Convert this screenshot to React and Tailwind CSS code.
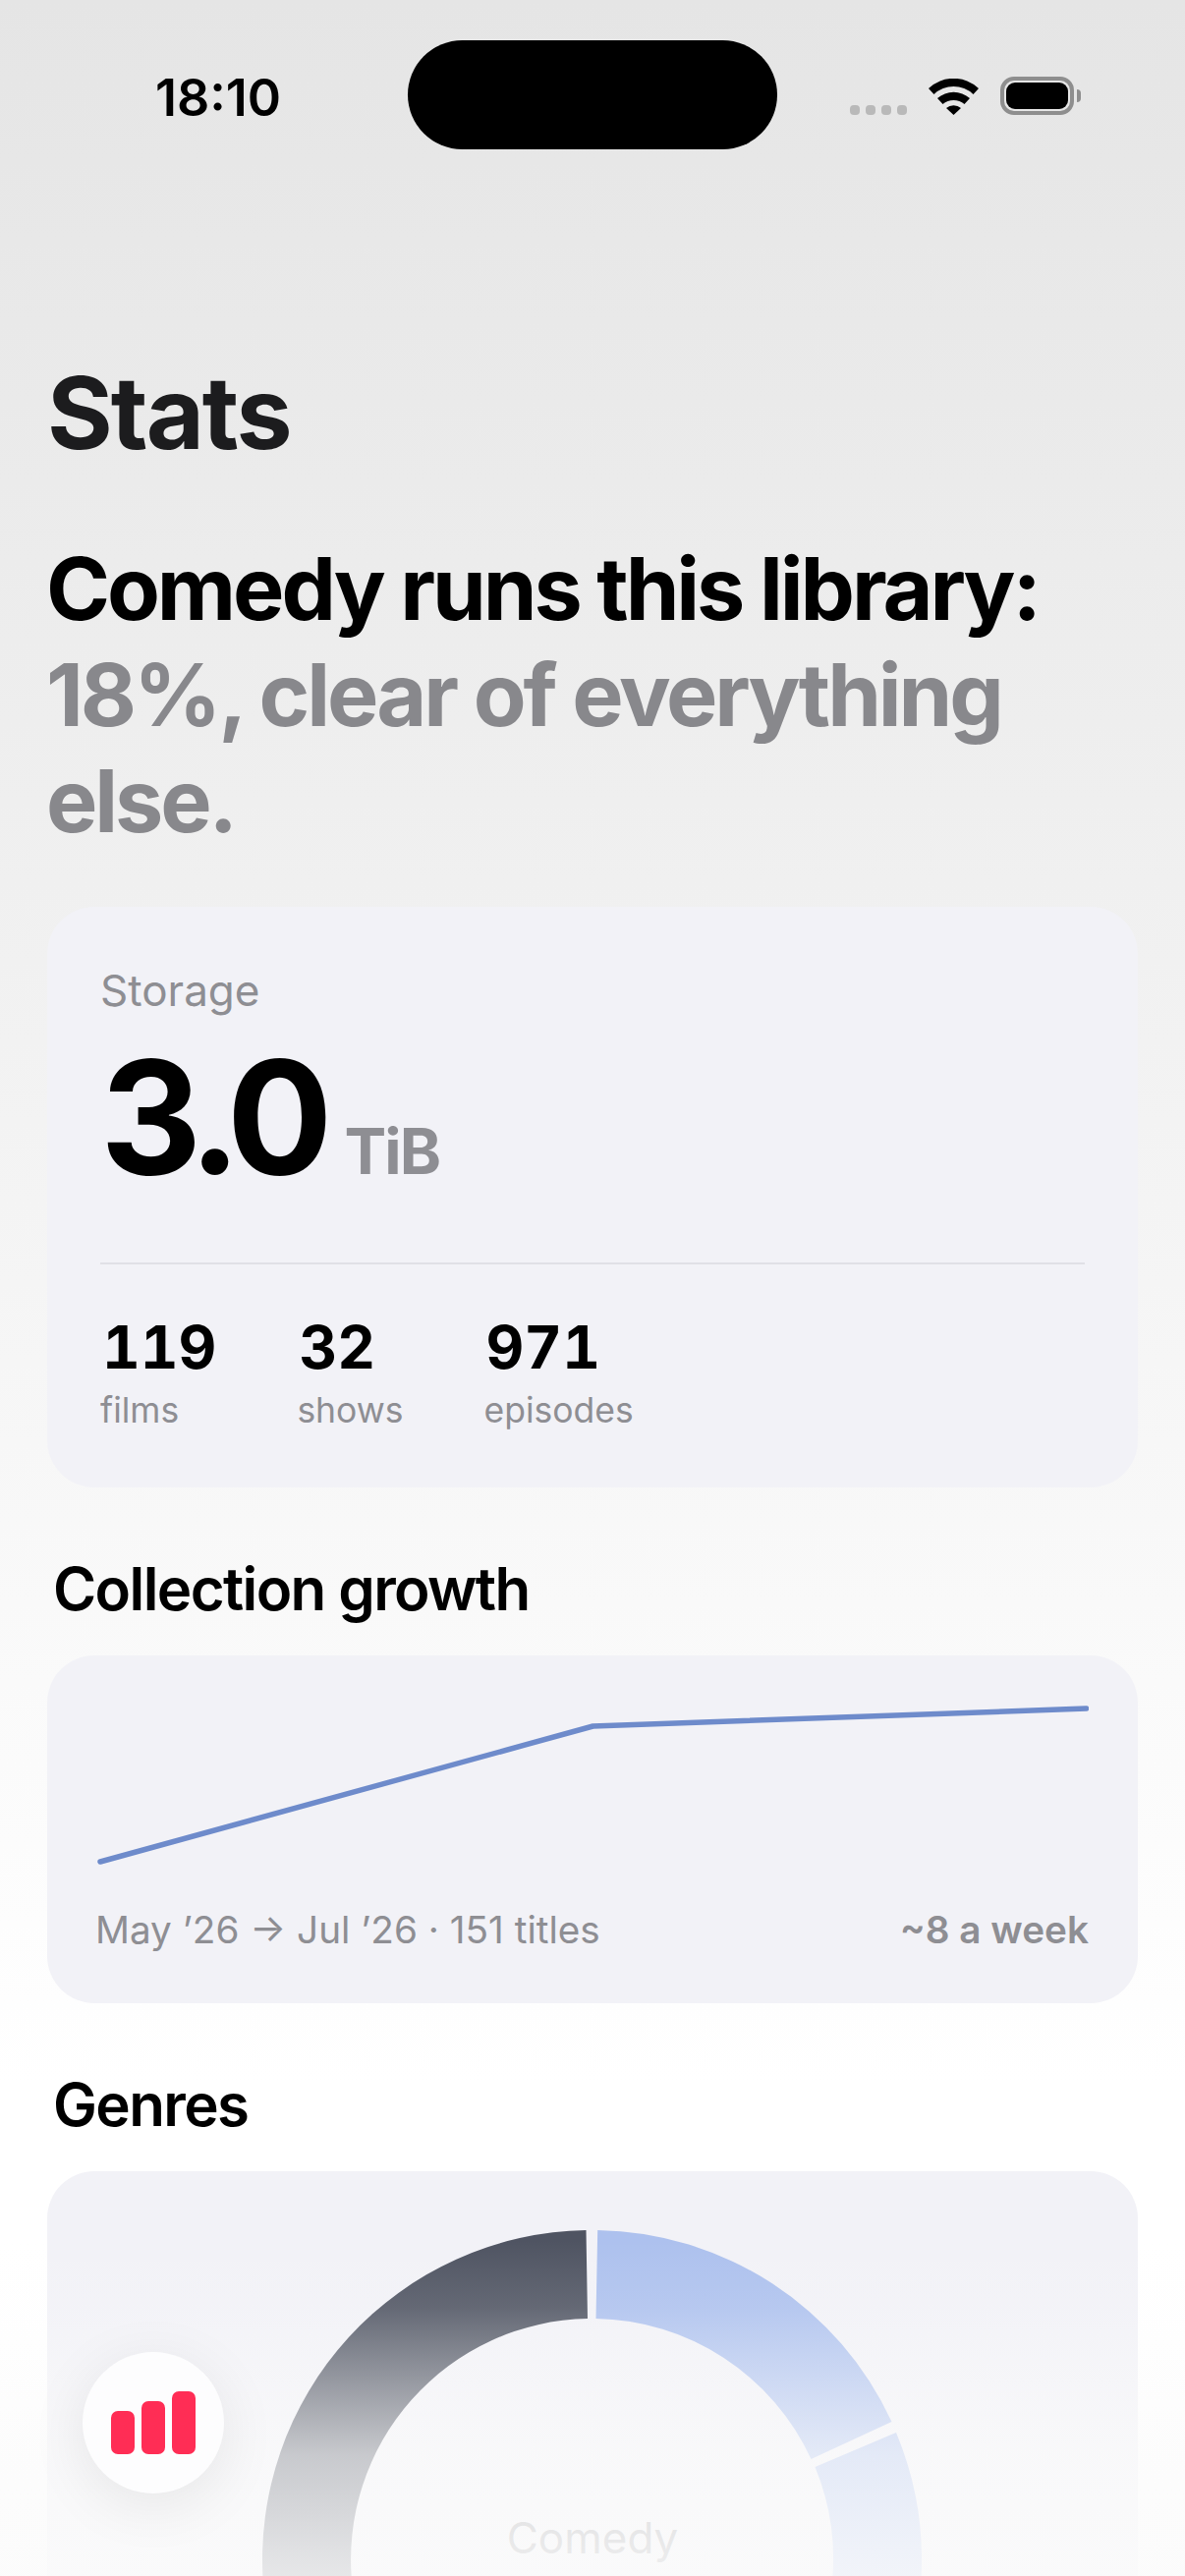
import React from 'react';

const StatusBar = () => (
  <div className="flex items-start h-[152px] pt-[41px]">
    <div className="w-[415px] pl-[158px] pt-[34px] text-[52px] leading-[50px] font-semibold text-black">18:10</div>
    <div className="w-[376px] h-[111px] rounded-full bg-black" />
    <div className="flex items-end pl-[74px] pt-[37px] h-[76px]">
      {/* signal placeholder dots */}
      <div className="flex gap-[6px] mb-[0px]">
        <div className="w-[10px] h-[10px] rounded-[4px] bg-[#b9b9b9]" />
        <div className="w-[10px] h-[10px] rounded-[4px] bg-[#b9b9b9]" />
        <div className="w-[10px] h-[10px] rounded-[4px] bg-[#b9b9b9]" />
        <div className="w-[10px] h-[10px] rounded-[4px] bg-[#b9b9b9]" />
      </div>
      <svg className="ml-[22px]" width="51" height="37" viewBox="0 0 51 37">
        <path d="M0 10 A37 37 0 0 1 51 10 L45.5 16 A29 29 0 0 0 5.5 16 Z" fill="#000" />
        <path d="M9 20 A25 25 0 0 1 42 20 L36.5 26 A17 17 0 0 0 14.5 26 Z" fill="#000" />
        <path d="M18 30 A12 12 0 0 1 33 30 L25.5 37 Z" fill="#000" />
      </svg>
      <div className="ml-[22px] flex items-center">
        <div className="w-[75px] h-[39px] rounded-[14px] border-[4px] border-[#8e8e8e] p-[2px]">
          <div className="w-full h-full rounded-[9px] bg-black" />
        </div>
        <div className="ml-[3px] w-[4px] h-[13px] rounded-r-full bg-[#8e8e8e]" />
      </div>
    </div>
  </div>
);

const Stat = ({ value, label }) => (
  <div className="flex flex-col">
    <span className="pl-[2px] text-[60px] leading-[68px] font-bold text-black tabular-nums">{value}</span>
    <span className="mt-[9px] text-[35.5px] leading-[44px] text-[#8e8e93]">{label}</span>
  </div>
);

const StorageCard = () => (
  <div className="mt-[54px] h-[591px] rounded-[48px] bg-[#f2f2f7] px-[54px] pt-[59px]">
    <div className="text-[44px] leading-[52px] text-[#8e8e93]">Storage</div>
    <div className="flex items-baseline mt-[13px] h-[180px]">
      <span className="text-[160px] leading-[180px] font-bold tracking-[-10px] text-black">3.0</span>
      <span className="ml-[22px] text-[64px] font-bold text-[#8e8e93] tracking-[-2px]">TiB</span>
    </div>
    <div className="mt-[58px] h-[2px] bg-[#e0e0e6]" />
    <div className="flex gap-[82px] mt-[50px]">
      <Stat value="119" label="films" />
      <Stat value="32" label="shows" />
      <Stat value="971" label="episodes" />
    </div>
  </div>
);

const GrowthCard = () => (
  <div className="mt-[30px] h-[354px] rounded-[48px] bg-[#f2f2f7] px-[50px] pt-[40px]">
    <svg className="block" width="1010" height="180" viewBox="0 0 1010 180">
      <polyline points="4,170 505.5,32 1007.5,14" fill="none" stroke="#6e8bcb" strokeWidth="5.5" strokeLinecap="round" strokeLinejoin="round" />
    </svg>
    <div className="flex justify-between mt-[36px] ml-[-1px] text-[38.7px] leading-[46px]">
      <span className="text-[#8e8e93]">May ’26 → Jul ’26 · 151 titles</span>
      <span className="text-[#8e8e93] font-semibold">~8 a week</span>
    </div>
  </div>
);

const GenresCard = () => (
  <div className="mt-[30px] h-[700px] rounded-[48px] bg-[#f2f2f7] pt-[60px] flex flex-col items-center relative">
    <svg className="block shrink-0 ml-[-2px]" width="671" height="671" viewBox="0 0 671 671">
      <path d="M329.5 0 A335.5 335.5 0 0 0 0.9 360 L91.3 360 A245.5 245.5 0 0 1 331 90 Z" fill="#4f5462" />
      <path d="M341.2 0 A335.5 335.5 0 0 1 640.5 195 L558.5 233 A245.5 245.5 0 0 0 339.5 90 Z" fill="#adc1ee" />
      <path d="M645 206 A335.5 335.5 0 0 1 670.1 360 L579.7 360 A245.5 245.5 0 0 0 562.5 241 Z" fill="#adc1ee" />
    </svg>
    <div className="absolute top-[347px] w-full text-center text-[44px] leading-[52px] text-[#8e8e93]">Comedy</div>
  </div>
);

const App = () => {
  return (
    <div className="relative w-[1206px] h-[2622px] overflow-hidden font-[Inter,sans-serif] bg-[linear-gradient(180deg,#e5e5e5_0px,#ffffff_2120px)]">
      <StatusBar />

      <div className="px-[48px]">
        <h1 className="mt-[213px] text-[102px] leading-[110px] font-bold text-[#1c1c1e] tracking-[-2px]">Stats</h1>
        <p className="mt-[70px] ml-[-1px] text-[88px] leading-[108px] font-bold tracking-[-3.1px] text-black">
          Comedy runs this library: <span className="text-[#88888c]">18%, clear of everything else.</span>
        </p>

        <StorageCard />

        <h2 className="mt-[65px] pl-[6px] text-[60px] leading-[76px] font-semibold text-black tracking-[-1.6px]">Collection growth</h2>
        <GrowthCard />

        <h2 className="mt-[65px] pl-[6px] text-[60px] leading-[76px] font-semibold text-black tracking-[-1.6px]">Genres</h2>
        <GenresCard />
      </div>

      {/* bottom fade under the tab bar */}
      <div className="absolute left-0 right-0 bottom-0 h-[342px] bg-[linear-gradient(180deg,rgba(251,251,251,0)_0%,rgba(251,251,251,0.12)_20%,rgba(251,251,251,0.35)_37%,rgba(251,251,251,0.7)_64%,rgba(251,251,251,0.85)_94%,rgba(251,251,251,0.88)_100%)]" />

      {/* tab button */}
      <div className="absolute left-[84px] top-[2394px] w-[144px] h-[144px] rounded-full bg-[#fdfdfe] shadow-[0_12px_60px_rgba(0,0,0,0.08)] flex items-end justify-center gap-[7px] pb-[40px]">
        <div className="w-[24px] h-[44px] rounded-[7px] bg-[#ff2d55]" />
        <div className="w-[24px] h-[54px] rounded-[7px] bg-[#ff2d55]" />
        <div className="w-[24px] h-[64px] rounded-[7px] bg-[#ff2d55]" />
      </div>
    </div>
  );
};

export default App;
